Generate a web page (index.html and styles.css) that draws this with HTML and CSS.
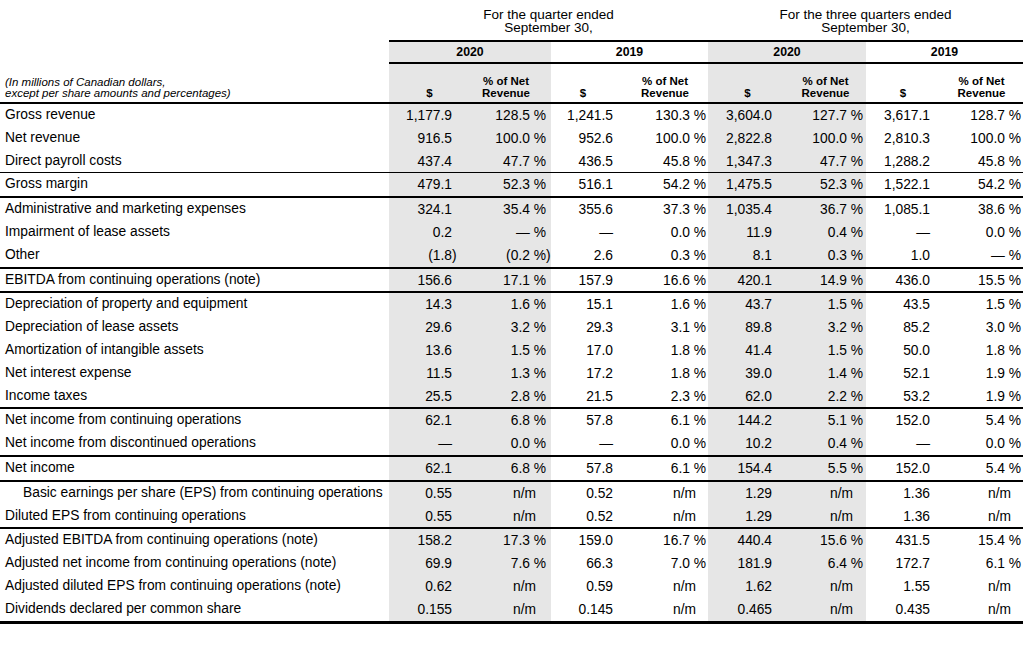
FILE: index.html
```html
<!DOCTYPE html>
<html lang="en">
<head>
<meta charset="utf-8">
<title>Financial highlights</title>
<link rel="stylesheet" href="styles.css">
</head>
<body>
<div class="report">
  <div class="grid periods">
    <div></div>
    <div class="title">For the quarter ended<br>September 30,</div>
    <div class="title">For the three quarters ended<br>September 30,</div>
  </div>
  <div class="grid years">
    <div></div>
    <div class="yr shade">2020</div>
    <div class="yr">2019</div>
    <div class="yr shade">2020</div>
    <div class="yr">2019</div>
  </div>
  <div class="grid subhead">
    <div class="note">(In millions of Canadian dollars,<br>except per share amounts and percentages)</div>
    <div class="shade">$</div>
    <div class="shade">% of Net<br>Revenue</div>
    <div>$</div>
    <div>% of Net<br>Revenue</div>
    <div class="shade">$</div>
    <div class="shade">% of Net<br>Revenue</div>
    <div>$</div>
    <div>% of Net<br>Revenue</div>
  </div>

  <div class="grid row"><div class="label">Gross revenue</div><div>1,177.9</div><div>128.5 %</div><div>1,241.5</div><div>130.3 %</div><div>3,604.0</div><div>127.7 %</div><div>3,617.1</div><div>128.7 %</div></div>
  <div class="grid row"><div class="label">Net revenue</div><div>916.5</div><div>100.0 %</div><div>952.6</div><div>100.0 %</div><div>2,822.8</div><div>100.0 %</div><div>2,810.3</div><div>100.0 %</div></div>
  <div class="grid row rule-thin"><div class="label">Direct payroll costs</div><div>437.4</div><div>47.7 %</div><div>436.5</div><div>45.8 %</div><div>1,347.3</div><div>47.7 %</div><div>1,288.2</div><div>45.8 %</div></div>
  <div class="grid row rule"><div class="label">Gross margin</div><div>479.1</div><div>52.3 %</div><div>516.1</div><div>54.2 %</div><div>1,475.5</div><div>52.3 %</div><div>1,522.1</div><div>54.2 %</div></div>
  <div class="grid row"><div class="label">Administrative and marketing expenses</div><div>324.1</div><div>35.4 %</div><div>355.6</div><div>37.3 %</div><div>1,035.4</div><div>36.7 %</div><div>1,085.1</div><div>38.6 %</div></div>
  <div class="grid row"><div class="label">Impairment of lease assets</div><div>0.2</div><div>— %</div><div>—</div><div>0.0 %</div><div>11.9</div><div>0.4 %</div><div>—</div><div>0.0 %</div></div>
  <div class="grid row rule"><div class="label">Other</div><div><span class="neg">(1.8)</span></div><div><span class="neg">(0.2 %)</span></div><div>2.6</div><div>0.3 %</div><div>8.1</div><div>0.3 %</div><div>1.0</div><div>— %</div></div>
  <div class="grid row rule"><div class="label">EBITDA from continuing operations (note)</div><div>156.6</div><div>17.1 %</div><div>157.9</div><div>16.6 %</div><div>420.1</div><div>14.9 %</div><div>436.0</div><div>15.5 %</div></div>
  <div class="grid row"><div class="label">Depreciation of property and equipment</div><div>14.3</div><div>1.6 %</div><div>15.1</div><div>1.6 %</div><div>43.7</div><div>1.5 %</div><div>43.5</div><div>1.5 %</div></div>
  <div class="grid row"><div class="label">Depreciation of lease assets</div><div>29.6</div><div>3.2 %</div><div>29.3</div><div>3.1 %</div><div>89.8</div><div>3.2 %</div><div>85.2</div><div>3.0 %</div></div>
  <div class="grid row"><div class="label">Amortization of intangible assets</div><div>13.6</div><div>1.5 %</div><div>17.0</div><div>1.8 %</div><div>41.4</div><div>1.5 %</div><div>50.0</div><div>1.8 %</div></div>
  <div class="grid row"><div class="label">Net interest expense</div><div>11.5</div><div>1.3 %</div><div>17.2</div><div>1.8 %</div><div>39.0</div><div>1.4 %</div><div>52.1</div><div>1.9 %</div></div>
  <div class="grid row rule"><div class="label">Income taxes</div><div>25.5</div><div>2.8 %</div><div>21.5</div><div>2.3 %</div><div>62.0</div><div>2.2 %</div><div>53.2</div><div>1.9 %</div></div>
  <div class="grid row"><div class="label">Net income from continuing operations</div><div>62.1</div><div>6.8 %</div><div>57.8</div><div>6.1 %</div><div>144.2</div><div>5.1 %</div><div>152.0</div><div>5.4 %</div></div>
  <div class="grid row rule"><div class="label">Net income from discontinued operations</div><div>—</div><div>0.0 %</div><div>—</div><div>0.0 %</div><div>10.2</div><div>0.4 %</div><div>—</div><div>0.0 %</div></div>
  <div class="grid row rule"><div class="label">Net income</div><div>62.1</div><div>6.8 %</div><div>57.8</div><div>6.1 %</div><div>154.4</div><div>5.5 %</div><div>152.0</div><div>5.4 %</div></div>
  <div class="grid row"><div class="label indent">Basic earnings per share (EPS) from continuing operations</div><div>0.55</div><div><span class="nm">n/m</span></div><div>0.52</div><div><span class="nm">n/m</span></div><div>1.29</div><div><span class="nm">n/m</span></div><div>1.36</div><div><span class="nm">n/m</span></div></div>
  <div class="grid row rule"><div class="label">Diluted EPS from continuing operations</div><div>0.55</div><div><span class="nm">n/m</span></div><div>0.52</div><div><span class="nm">n/m</span></div><div>1.29</div><div><span class="nm">n/m</span></div><div>1.36</div><div><span class="nm">n/m</span></div></div>
  <div class="grid row"><div class="label">Adjusted EBITDA from continuing operations (note)</div><div>158.2</div><div>17.3 %</div><div>159.0</div><div>16.7 %</div><div>440.4</div><div>15.6 %</div><div>431.5</div><div>15.4 %</div></div>
  <div class="grid row"><div class="label">Adjusted net income from continuing operations (note)</div><div>69.9</div><div>7.6 %</div><div>66.3</div><div>7.0 %</div><div>181.9</div><div>6.4 %</div><div>172.7</div><div>6.1 %</div></div>
  <div class="grid row"><div class="label">Adjusted diluted EPS from continuing operations (note)</div><div>0.62</div><div><span class="nm">n/m</span></div><div>0.59</div><div><span class="nm">n/m</span></div><div>1.62</div><div><span class="nm">n/m</span></div><div>1.55</div><div><span class="nm">n/m</span></div></div>
  <div class="grid row rule-end"><div class="label">Dividends declared per common share</div><div>0.155</div><div><span class="nm">n/m</span></div><div>0.145</div><div><span class="nm">n/m</span></div><div>0.465</div><div><span class="nm">n/m</span></div><div>0.435</div><div><span class="nm">n/m</span></div></div>
</div>
</body>
</html>
```

FILE: styles.css
```css
* {
  box-sizing: border-box;
}

body {
  margin: 0;
  background: #ffffff;
  color: #000000;
  font-family: "Liberation Sans", Arial, sans-serif;
}

.report {
  width: 1023px;
}

.grid {
  display: grid;
  grid-template-columns: 389px 81px 81px 71px 86px 79px 79px 74px 83px;
}

.shade {
  background: #e6e6e6;
}

/* period titles */
.periods {
  height: 42px;
}

.periods .title {
  grid-column: span 4;
  border-bottom: 2px solid #000;
  text-align: center;
  font-size: 13.5px;
  line-height: 12.5px;
  padding-top: 9px;
}

/* year row */
.years {
  height: 22px;
}

.years .yr {
  grid-column: span 2;
  border-bottom: 2px solid #000;
  text-align: center;
  font-weight: bold;
  font-size: 12.3px;
  line-height: 20px;
}

/* column subheadings */
.subhead {
  height: 40px;
  border-bottom: 2px solid #000;
}

.subhead > div {
  display: flex;
  flex-direction: column;
  justify-content: flex-end;
  align-items: center;
  text-align: center;
  padding-bottom: 3px;
  font-weight: bold;
  font-size: 11.5px;
  line-height: 11.5px;
}

.subhead > div:nth-child(3) {
  padding-right: 9px;
}

.subhead > div:nth-child(4) {
  padding-right: 7px;
}

.subhead > div:nth-child(7) {
  padding-right: 2px;
}

.subhead > .note {
  align-items: flex-start;
  text-align: left;
  padding-left: 5px;
  font-weight: normal;
  font-style: italic;
  font-size: 11.5px;
  line-height: 11px;
}

/* data rows */
.row {
  height: 22.8px;
  font-size: 13.8px;
}

.row.rule-thin {
  height: 23.8px;
  border-bottom: 1px solid #000;
}

.row.rule {
  height: 24.8px;
  border-bottom: 2px solid #000;
}

.row.rule-end {
  height: 25.8px;
  border-bottom: 3px solid #000;
}

.row > div {
  text-align: right;
  white-space: nowrap;
  padding-top: 2px;
  line-height: 20.8px;
}

.row > .label {
  text-align: left;
  padding-top: 0;
  padding-left: 5px;
  line-height: 22.8px;
}

.row > .label.indent {
  padding-left: 23px;
}

.row > div:nth-child(2),
.row > div:nth-child(3),
.row > div:nth-child(6),
.row > div:nth-child(7) {
  background: #e6e6e6;
}

.row > div:nth-child(2) { padding-right: 18px; }
.row > div:nth-child(3) { padding-right: 5px; }
.row > div:nth-child(4) { padding-right: 9px; }
.row > div:nth-child(5) { padding-right: 2px; }
.row > div:nth-child(6) { padding-right: 15px; }
.row > div:nth-child(7) { padding-right: 3px; }
.row > div:nth-child(8) { padding-right: 10px; }
.row > div:nth-child(9) { padding-right: 2px; }

.neg {
  display: inline-block;
  margin-right: -0.33em;
}

.nm {
  display: inline-block;
  margin-right: 10px;
}
```
